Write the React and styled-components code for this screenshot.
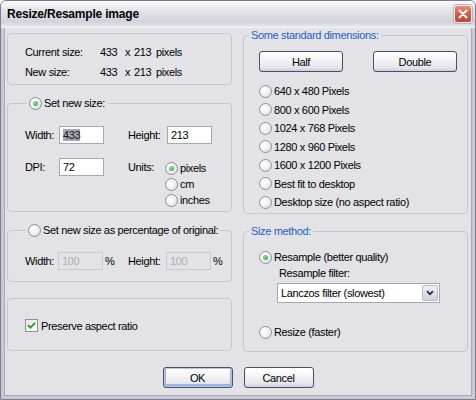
import React from "react";
import styled, { createGlobalStyle } from "styled-components";

const GlobalStyle = createGlobalStyle`
  html, body { margin: 0; padding: 0; background: #ffffff; }
  body {
    font-family: "Liberation Sans", Arial, sans-serif;
    font-size: 11px;
    letter-spacing: -0.35px;
    color: #000;
  }
  * { box-sizing: border-box; }
`;

const Window = styled.div`
  width: 476px;
  height: 400px;
  display: flex;
  flex-direction: column;
  background: #c9c8d4;
  border: 1px solid #7c7c8e;
  border-radius: 6px 6px 0 0;
  overflow: hidden;
`;

const TitleBar = styled.div`
  height: 27px;
  flex: none;
  display: flex;
  align-items: center;
  justify-content: space-between;
  padding: 0 3px 0 6px;
  background: linear-gradient(#fbfbfc 0%, #e4e4ea 35%, #d2d2dc 80%, #e9e9ef 100%);
  border-bottom: 1px solid #f4f4f7;
`;

const Title = styled.span`
  font-size: 12px;
  font-weight: bold;
  letter-spacing: -0.2px;
  color: #000;
`;

const CloseButton = styled.div`
  width: 18px;
  height: 18px;
  border-radius: 3px;
  border: 1px solid #f3eeee;
  box-shadow: 0 0 0 1px #b6b6c4;
  background: linear-gradient(#e8917c 0%, #d2604b 45%, #bd4634 100%);
  display: flex;
  align-items: center;
  justify-content: center;
`;

const Body = styled.div`
  flex: 1;
  margin: 0 3px 3px;
  background: #e3e2e7;
  border: 1px solid #a9a9b8;
  border-top: 0;
  display: flex;
  flex-direction: column;
`;

const Columns = styled.div`
  display: grid;
  grid-template-columns: 225px 225px;
  column-gap: 11px;
  padding: 0 3px 0 2px;
`;

const Column = styled.div`
  display: flex;
  flex-direction: column;
`;

const Box = styled.div`
  margin-top: ${(p) => p.$mt}px;
  height: ${(p) => p.$h}px;
  padding: ${(p) => p.$pt}px 0 0 17px;
  border: 1px solid #c7c6d0;
  border-radius: 4px;
`;

const Group = styled.fieldset`
  margin: ${(p) => p.$mt}px 0 0;
  padding: 0;
  min-width: 0;
  height: ${(p) => p.$h}px;
  border: 1px solid #c7c6d0;
  border-radius: 4px;
`;

const Legend = styled.legend`
  margin-left: ${(p) => p.$ml}px;
  padding: 0 2px;
  height: 14px;
  line-height: 14px;
  display: flex;
  align-items: center;
  gap: 2px;
  color: ${(p) => (p.$blue ? "#1f5fc2" : "#000")};
`;

const Content = styled.div`
  padding: ${(p) => p.$pt}px 0 0 ${(p) => p.$pl}px;
`;

const InfoRow = styled.div`
  display: grid;
  grid-template-columns: 75px 25px 9px 22px auto;
  height: 20px;
  align-items: center;
`;

const FieldGrid = styled.div`
  display: grid;
  grid-template-columns: ${(p) => p.$cols};
  align-items: start;
  margin-top: ${(p) => p.$mt || 0}px;
`;

const Label = styled.span`
  line-height: 18px;
`;

const TextBox = styled.div`
  width: 45px;
  height: 18px;
  padding-left: 3px;
  line-height: 16px;
  border: 1px solid ${(p) => (p.$disabled ? "#c9c9d2" : "#a2a9b6")};
  background: ${(p) => (p.$disabled ? "#e3e2e7" : "#ffffff")};
  color: ${(p) => (p.$disabled ? "#adadb6" : "#000")};
`;

const Selected = styled.span`
  background: #a6a6b2;
  color: #1a1a1a;
`;

const Pct = styled.span`
  line-height: 18px;
  padding-left: 2px;
`;

const RadioStack = styled.div`
  display: flex;
  flex-direction: column;
  margin: 2px 0 0 -2px;
`;

const Option = styled.div`
  display: flex;
  align-items: center;
  gap: 2px;
  height: ${(p) => p.$h || 16}px;
  margin-top: ${(p) => p.$mt || 0}px;
`;

const RadioDot = styled.span`
  flex: none;
  width: 13px;
  height: 13px;
  border-radius: 50%;
  border: 1px solid #8c8ea0;
  background: radial-gradient(circle at 35% 35%, #ffffff 0%, #f2f2f5 45%, #d3d3dc 100%);
  display: inline-flex;
  align-items: center;
  justify-content: center;

  &::after {
    content: "";
    display: ${(p) => (p.$on ? "block" : "none")};
    width: 5px;
    height: 5px;
    border-radius: 50%;
    background: radial-gradient(circle at 35% 35%, #8fe68f, #23a323);
  }
`;

const CheckRow = styled.div`
  display: flex;
  align-items: center;
  gap: 3px;
  height: 13px;
`;

const CheckBox = styled.span`
  flex: none;
  width: 13px;
  height: 13px;
  border: 1px solid #8c8ea0;
  background: linear-gradient(135deg, #e6e6ec, #ffffff);
  display: inline-flex;
  align-items: center;
  justify-content: center;
`;

const ButtonRow = styled.div`
  display: flex;
  gap: 30px;
`;

const PushButton = styled.button`
  width: ${(p) => p.$w}px;
  height: 21px;
  padding: 0;
  font: inherit;
  letter-spacing: inherit;
  color: #000;
  border: 1px solid #4b4e64;
  border-radius: 3px;
  background: linear-gradient(#ffffff 0%, #f4f4f7 45%, #e3e3eb 85%, #cdcdd8 100%);
  box-shadow: ${(p) => (p.$default ? "inset 0 0 0 1px #b7c5e6, inset 0 -1px 0 2px #9fb2de" : "none")};
`;

const RadioList = styled.div`
  display: flex;
  flex-direction: column;
  margin-top: 10px;
`;

const SubLabel = styled.div`
  margin-left: 20px;
  line-height: 16px;
`;

const Select = styled.div`
  margin: 2px 0 0 18px;
  width: 163px;
  height: 20px;
  border: 1px solid #a2a9b6;
  background: #fff;
  display: flex;
  align-items: center;
  justify-content: space-between;
  padding: 0 1px 0 3px;
`;

const DropButton = styled.span`
  width: 16px;
  height: 16px;
  border: 1px solid #b9bccb;
  border-radius: 2px;
  background: linear-gradient(#f1f1f6, #cfd0dc);
  display: flex;
  align-items: center;
  justify-content: center;
`;

const Footer = styled.div`
  display: flex;
  justify-content: center;
  gap: 11px;
  padding-top: 15px;
`;

const Radio = ({ on, h, mt, children }) => (
  <Option $h={h} $mt={mt}>
    <RadioDot $on={on} />
    {children}
  </Option>
);

const sizes = [
  "640 x 480 Pixels",
  "800 x 600 Pixels",
  "1024 x 768 Pixels",
  "1280 x 960 Pixels",
  "1600 x 1200 Pixels",
  "Best fit to desktop",
  "Desktop size (no aspect ratio)",
];

export default function App() {
  return (
    <>
      <GlobalStyle />
      <Window>
        <TitleBar>
          <Title>Resize/Resample image</Title>
          <CloseButton>
            <svg width="10" height="10" viewBox="0 0 10 10">
              <path d="M1.5 1.5 L8.5 8.5 M8.5 1.5 L1.5 8.5" stroke="#fff" strokeWidth="2" strokeLinecap="round" />
            </svg>
          </CloseButton>
        </TitleBar>
        <Body>
          <Columns>
            <Column>
              <Box $mt={5} $h={52} $pt={8}>
                <InfoRow>
                  <span>Current size:</span><span>433</span><span>x</span><span>213</span><span>pixels</span>
                </InfoRow>
                <InfoRow>
                  <span>New size:</span><span>433</span><span>x</span><span>213</span><span>pixels</span>
                </InfoRow>
              </Box>

              <Group $mt={11} $h={116}>
                <Legend $ml={19}>
                  <RadioDot $on />
                  Set new size:
                </Legend>
                <Content $pt={16} $pl={17}>
                  <FieldGrid $cols="34px 45px 24px 39px auto">
                    <Label>Width:</Label>
                    <TextBox><Selected>433</Selected></TextBox>
                    <span />
                    <Label>Height:</Label>
                    <TextBox>213</TextBox>
                  </FieldGrid>
                  <FieldGrid $cols="34px 45px 24px 39px auto" $mt={14}>
                    <Label>DPI:</Label>
                    <TextBox>72</TextBox>
                    <span />
                    <Label>Units:</Label>
                    <RadioStack>
                      <Radio on>pixels</Radio>
                      <Radio>cm</Radio>
                      <Radio>inches</Radio>
                    </RadioStack>
                  </FieldGrid>
                </Content>
              </Group>

              <Group $mt={11} $h={59}>
                <Legend $ml={18}>
                  <RadioDot />
                  Set new size as percentage of original:
                </Legend>
                <Content $pt={15} $pl={17}>
                  <FieldGrid $cols="33px 45px 25px 38px 45px auto">
                    <Label>Width:</Label>
                    <TextBox $disabled>100</TextBox>
                    <Pct>%</Pct>
                    <Label>Height:</Label>
                    <TextBox $disabled>100</TextBox>
                    <Pct>%</Pct>
                  </FieldGrid>
                </Content>
              </Group>

              <Box $mt={16} $h={53} $pt={20}>
                <CheckRow>
                  <CheckBox>
                    <svg width="9" height="9" viewBox="0 0 9 9">
                      <path d="M1 4.2 L3.4 6.6 L8 1.8" fill="none" stroke="#21a121" strokeWidth="1.8" />
                    </svg>
                  </CheckBox>
                  Preserve aspect ratio
                </CheckRow>
              </Box>
            </Column>

            <Column>
              <Group $mt={0} $h={186}>
                <Legend $ml={5} $blue>Some standard dimensions:</Legend>
                <Content $pt={9} $pl={15}>
                  <ButtonRow>
                    <PushButton $w={84}>Half</PushButton>
                    <PushButton $w={84}>Double</PushButton>
                  </ButtonRow>
                  <RadioList>
                    {sizes.map((s) => (
                      <Radio key={s} h={18.5}>{s}</Radio>
                    ))}
                  </RadioList>
                </Content>
              </Group>

              <Group $mt={10} $h={128}>
                <Legend $ml={5} $blue>Size method:</Legend>
                <Content $pt={11} $pl={15}>
                  <Radio on>Resample (better quality)</Radio>
                  <SubLabel>Resample filter:</SubLabel>
                  <Select>
                    <span>Lanczos filter (slowest)</span>
                    <DropButton>
                      <svg width="8" height="6" viewBox="0 0 8 6">
                        <path d="M1 1.2 L4 4.2 L7 1.2" fill="none" stroke="#2b2f4a" strokeWidth="1.8" />
                      </svg>
                    </DropButton>
                  </Select>
                  <Radio mt={21}>Resize (faster)</Radio>
                </Content>
              </Group>
            </Column>
          </Columns>

          <Footer>
            <PushButton $w={70} $default>OK</PushButton>
            <PushButton $w={70}>Cancel</PushButton>
          </Footer>
        </Body>
      </Window>
    </>
  );
}
